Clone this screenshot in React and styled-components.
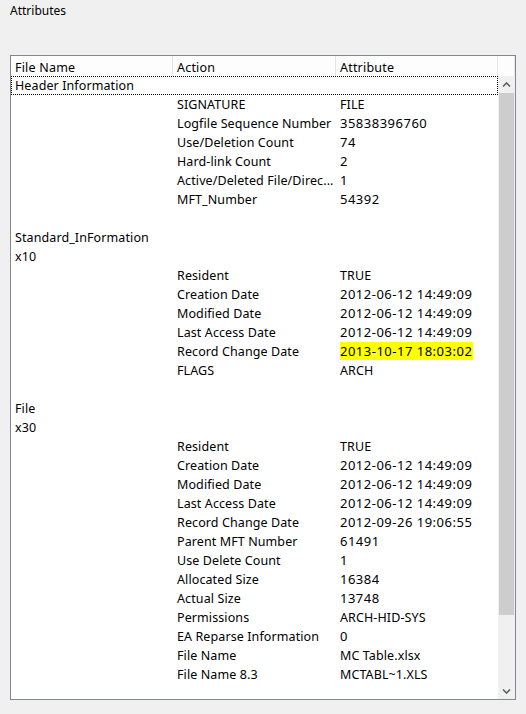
import styled, { createGlobalStyle } from "styled-components";

const Global = createGlobalStyle`
  html, body { margin: 0; padding: 0; background: #f0f0f0; }
  body { font-family: "Noto Sans", "Liberation Sans", sans-serif; font-size: 12.5px; color: #000; }
`;

const Page = styled.div`
  width: 526px;
  height: 714px;
  padding: 3px 10px 0 10px;
  box-sizing: border-box;
  display: flex;
  flex-direction: column;
`;

const Title = styled.div`
  height: 16px;
  line-height: 16px;
  font-size: 12px;
  margin-bottom: 36px;
`;

const ListBox = styled.div`
  width: 506px;
  height: 645px;
  box-sizing: border-box;
  border: 1px solid #828790;
  background: #fff;
  display: flex;
  flex-direction: column;
  overflow: hidden;
`;

const HeaderRow = styled.div`
  display: grid;
  grid-template-columns: 162px 163px 162px 17px;
  height: 20px;
  background: #fdfdfd;
`;

const HeaderCell = styled.div`
  padding: 2px 0 0 4px;
  line-height: 20px;
  border-right: 1px solid #e5e5e5;
  white-space: nowrap;
  overflow: hidden;
  letter-spacing: 0.2px;
`;

const Body = styled.div`
  flex: 1;
  display: flex;
  min-height: 0;
`;

const Rows = styled.div`
  flex: 1;
  display: flex;
  flex-direction: column;
`;

const Row = styled.div`
  display: grid;
  grid-template-columns: 162px 163px 162px;
  height: 19px;
  box-sizing: border-box;
  outline: ${({ $focus }) => ($focus ? "1px dotted #000" : "none")};
  outline-offset: -1px;
`;

const Cell = styled.div`
  padding-left: 4px;
  line-height: 19px;
  white-space: nowrap;
  overflow: hidden;
  font-size: ${({ $num }) => ($num ? "13px" : "12.5px")};
  letter-spacing: ${({ $num }) => ($num ? "0.5px" : "0.1px")};
`;

const Mark = styled.span`
  background: #ffff00;
  padding: 1px 1px 0 0;
`;

const ScrollBar = styled.div`
  width: 17px;
  display: flex;
  flex-direction: column;
  background: #f0f0f0;
`;

const Arrow = styled.div`
  height: 17px;
  display: flex;
  align-items: center;
  justify-content: center;
`;

const Thumb = styled.div`
  height: 522px;
  margin: 0 1px;
  background: #cdcdcd;
`;

const Track = styled.div`
  flex: 1;
`;

const Chevron = ({ down }) => (
  <svg width="9" height="6" viewBox="0 0 9 6">
    <path
      d={down ? "M1 1.5 L4.5 5 L8 1.5" : "M1 4.5 L4.5 1 L8 4.5"}
      fill="none"
      stroke="#606060"
      strokeWidth="1.6"
    />
  </svg>
);

const rows = [
  { a: "Header Information", focus: true },
  { b: "SIGNATURE", c: "FILE" },
  { b: "Logfile Sequence Number", c: "35838396760" },
  { b: "Use/Deletion Count", c: "74" },
  { b: "Hard-link Count", c: "2" },
  { b: "Active/Deleted File/Direc...", c: "1" },
  { b: "MFT_Number", c: "54392" },
  {},
  { a: "Standard_InFormation" },
  { a: "x10" },
  { b: "Resident", c: "TRUE" },
  { b: "Creation Date", c: "2012-06-12 14:49:09" },
  { b: "Modified Date", c: "2012-06-12 14:49:09" },
  { b: "Last Access Date", c: "2012-06-12 14:49:09" },
  { b: "Record Change Date", c: "2013-10-17 18:03:02", mark: true },
  { b: "FLAGS", c: "ARCH" },
  {},
  { a: "File" },
  { a: "x30" },
  { b: "Resident", c: "TRUE" },
  { b: "Creation Date", c: "2012-06-12 14:49:09" },
  { b: "Modified Date", c: "2012-06-12 14:49:09" },
  { b: "Last Access Date", c: "2012-06-12 14:49:09" },
  { b: "Record Change Date", c: "2012-09-26 19:06:55" },
  { b: "Parent MFT Number", c: "61491" },
  { b: "Use Delete Count", c: "1" },
  { b: "Allocated Size", c: "16384" },
  { b: "Actual Size", c: "13748" },
  { b: "Permissions", c: "ARCH-HID-SYS" },
  { b: "EA Reparse Information", c: "0" },
  { b: "File Name", c: "MC Table.xlsx" },
  { b: "File Name 8.3", c: "MCTABL~1.XLS" },
];

const isNum = (s) => !!s && /^[\d\s:-]+$/.test(s);

export default function App() {
  return (
    <Page>
      <Global />
      <Title>Attributes</Title>
      <ListBox>
        <HeaderRow>
          <HeaderCell>File Name</HeaderCell>
          <HeaderCell>Action</HeaderCell>
          <HeaderCell>Attribute</HeaderCell>
          <HeaderCell />
        </HeaderRow>
        <Body>
          <Rows>
            {rows.map((r, i) => (
              <Row key={i} $focus={r.focus}>
                <Cell>{r.a}</Cell>
                <Cell>{r.b}</Cell>
                <Cell $num={isNum(r.c)}>{r.mark ? <Mark>{r.c}</Mark> : r.c}</Cell>
              </Row>
            ))}
          </Rows>
          <ScrollBar>
            <Arrow><Chevron /></Arrow>
            <Thumb />
            <Track />
            <Arrow><Chevron down /></Arrow>
          </ScrollBar>
        </Body>
      </ListBox>
    </Page>
  );
}
